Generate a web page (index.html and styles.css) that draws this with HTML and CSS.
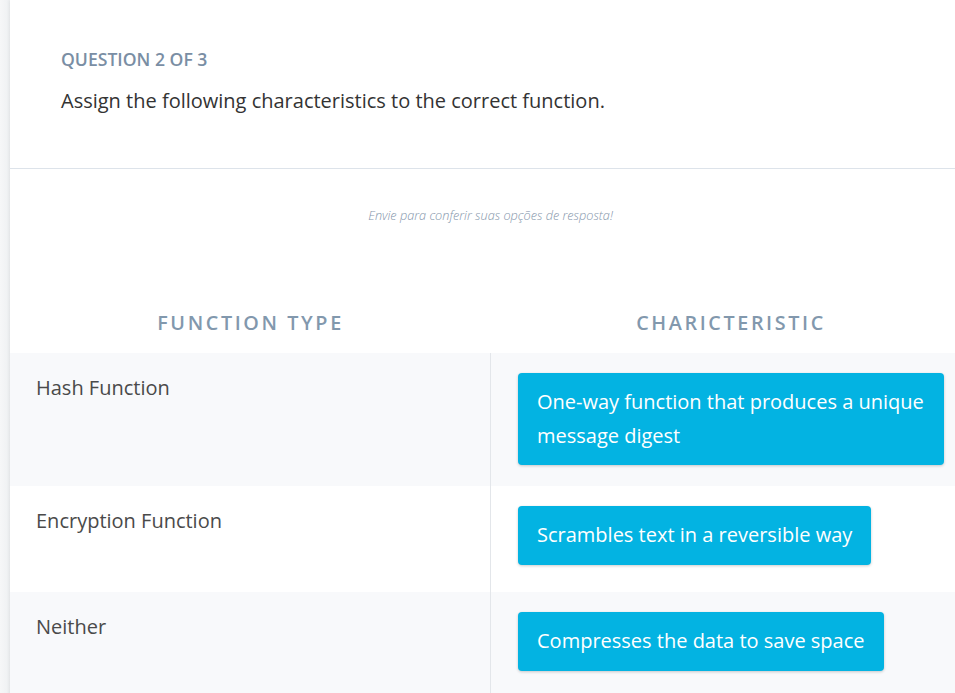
FILE: index.html
```html
<!DOCTYPE html>
<html lang="en">
<head>
<meta charset="utf-8">
<title>Question 2 of 3</title>
<link rel="stylesheet" href="styles.css">
</head>
<body>
<main class="card">
  <header class="question">
    <div class="q-label">QUESTION 2 OF 3</div>
    <div class="q-text">Assign the following characteristics to the correct function.</div>
  </header>
  <section class="body">
    <p class="hint">Envie para conferir suas opções de resposta!</p>
    <div class="table">
      <div class="head">
        <div class="th">FUNCTION TYPE</div>
        <div class="th">CHARICTERISTIC</div>
      </div>
      <div class="row alt">
        <div class="cell-label">Hash Function</div>
        <div class="cell-drop"><span class="chip">One-way function that produces a unique message digest</span></div>
      </div>
      <div class="row">
        <div class="cell-label">Encryption Function</div>
        <div class="cell-drop"><span class="chip">Scrambles text in a reversible way</span></div>
      </div>
      <div class="row alt">
        <div class="cell-label">Neither</div>
        <div class="cell-drop"><span class="chip">Compresses the data to save space</span></div>
      </div>
    </div>
  </section>
</main>
</body>
</html>
```

FILE: styles.css
```css
html, body {
  margin: 0;
  padding: 0;
}
body {
  background: linear-gradient(to right, #f6f7f8 0, #eef0f2 10px);
  font-family: "Open Sans", "Noto Sans", sans-serif;
  overflow: hidden;
  width: 955px;
  height: 693px;
}
.card {
  margin-left: 10px;
  width: 961px;
  min-height: 693px;
  background: #fff;
  box-shadow: -1px 0 3px rgba(0, 0, 0, 0.06);
}
.question {
  padding: 46px 51px 52px;
  border-bottom: 1px solid #dde3ea;
}
.q-label {
  font-size: 17.6px;
  line-height: 26px;
  font-weight: 600;
  color: #7a8ea4;
}
.q-text {
  margin-top: 14px;
  font-size: 20px;
  line-height: 30px;
  color: #333;
}
.hint {
  margin: 0;
  padding-top: 38px;
  text-align: center;
  font-size: 12.7px;
  line-height: 16px;
  font-style: italic;
  font-weight: 300;
  color: #8596ab;
}
.table {
  margin-top: 85px;
}
.head {
  display: grid;
  grid-template-columns: 481px 480px;
  padding-bottom: 15px;
}
.th {
  text-align: center;
  font-size: 19.8px;
  line-height: 30px;
  font-weight: 600;
  letter-spacing: 2.6px;
  color: #8298ad;
}
.row {
  display: grid;
  grid-template-columns: 481px 480px;
  min-height: 106px;
  background: #fff;
}
.row.alt {
  background: #f8f9fb;
}
.cell-label {
  padding: 20px 26px;
  font-size: 20px;
  line-height: 30px;
  color: #4a4a4a;
  border-right: 1px solid #e3e6ea;
}
.cell-drop {
  padding: 20px 27px 21px;
}
.chip {
  display: inline-block;
  background: #03b3e2;
  color: #fff;
  font-size: 20px;
  line-height: 33.5px;
  padding: 12px 19px 13px;
  border-radius: 4px;
  box-shadow: 0 1px 3px rgba(0, 0, 0, 0.2);
}
```
